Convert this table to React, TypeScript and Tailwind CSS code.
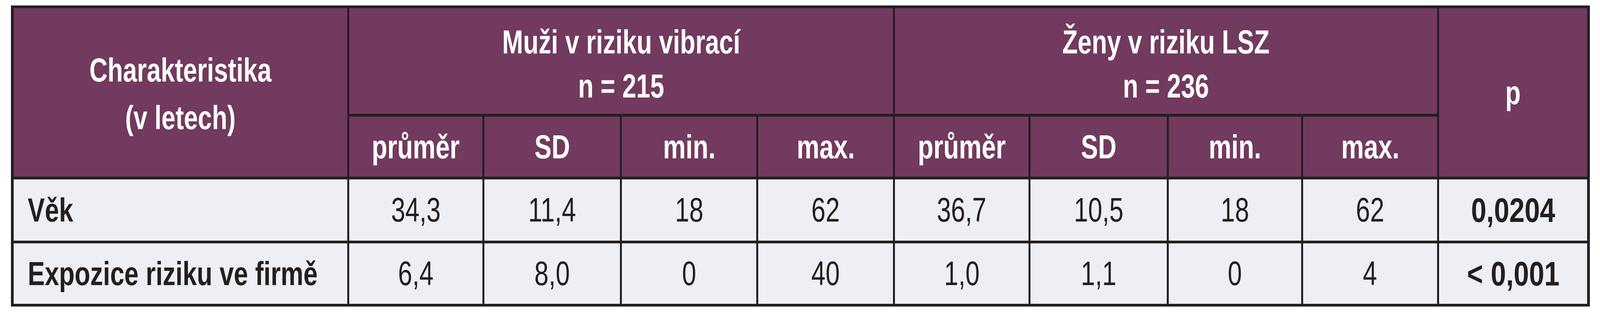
// Viewport is 4096 wide; columns keep the reference's proportions,
// and the (condensed) type is narrowed with scale-x.
const colWidths = [860, 346, 352, 349, 350, 347, 354, 344, 348, 385]

const subHeads = ["průměr", "SD", "min.", "max."]

const rows = [
  {
    label: "Věk",
    values: ["34,3", "11,4", "18", "62", "36,7", "10,5", "18", "62"],
    p: "0,0204",
  },
  {
    label: "Expozice riziku ve firmě",
    values: ["6,4", "8,0", "0", "40", "1,0", "1,1", "0", "4"],
    p: "< 0,001",
  },
]

const th =
  "border-x-[5px] border-y-[7px] border-[#231f20] bg-[#723a5e] text-center align-middle font-bold text-white"
const td = "border-x-[5px] border-y-[7px] border-[#231f20] bg-[#eeeef5] align-middle text-[#231f20]"
const narrow = "inline-block whitespace-nowrap"

export default function App() {
  return (
    <div
      className="min-h-[800px] w-full overflow-hidden bg-white pl-[28px] pt-[14px]"
      style={{ fontFamily: '"Liberation Sans", Arial, sans-serif' }}
    >
      <table className="w-[4040px] table-fixed border-collapse border-[7px] border-[#231f20]">
        <colgroup>
          {colWidths.map((w, i) => (
            <col key={i} style={{ width: w }} />
          ))}
        </colgroup>
        <thead>
          <tr className="h-[278px]">
            <th rowSpan={2} className={`${th} pt-[6px] text-[86px] leading-[122px]`}>
              <span className={`${narrow} scale-x-[0.75]`}>
                Charakteristika
                <br />
                (v letech)
              </span>
            </th>
            <th colSpan={4} className={`${th} pt-[14px] text-[86px] leading-[113px]`}>
              <span className={`${narrow} scale-x-[0.75]`}>
                Muži v riziku vibrací
                <br />n = 215
              </span>
            </th>
            <th colSpan={4} className={`${th} pt-[14px] text-[86px] leading-[113px]`}>
              <span className={`${narrow} scale-x-[0.75]`}>
                Ženy v riziku LSZ
                <br />n = 236
              </span>
            </th>
            <th rowSpan={2} className={`${th} text-[86px]`}>
              <span className={`${narrow} scale-x-[0.75]`}>p</span>
            </th>
          </tr>
          <tr className="h-[161px]">
            {[...subHeads, ...subHeads].map((h, i) => (
              <th key={i} className={`${th} text-[86px]`}>
                <span className={`${narrow} scale-x-[0.76]`}>{h}</span>
              </th>
            ))}
          </tr>
        </thead>
        <tbody>
          {rows.map((r, ri) => (
            <tr key={r.label} className={ri === 0 ? "h-[164px]" : "h-[162px]"}>
              <td className={`${td} overflow-visible pl-[36px] text-[85px] font-bold`}>
                <span className={`${narrow} origin-left scale-x-[0.77]`}>{r.label}</span>
              </td>
              {r.values.map((v, i) => (
                <td key={i} className={`${td} text-center text-[87px]`}>
                  <span className={`${narrow} scale-x-[0.75]`}>{v}</span>
                </td>
              ))}
              <td className={`${td} text-center text-[88px] font-bold`}>
                <span className={`${narrow} scale-x-[0.8]`}>{r.p}</span>
              </td>
            </tr>
          ))}
        </tbody>
      </table>
    </div>
  )
}
